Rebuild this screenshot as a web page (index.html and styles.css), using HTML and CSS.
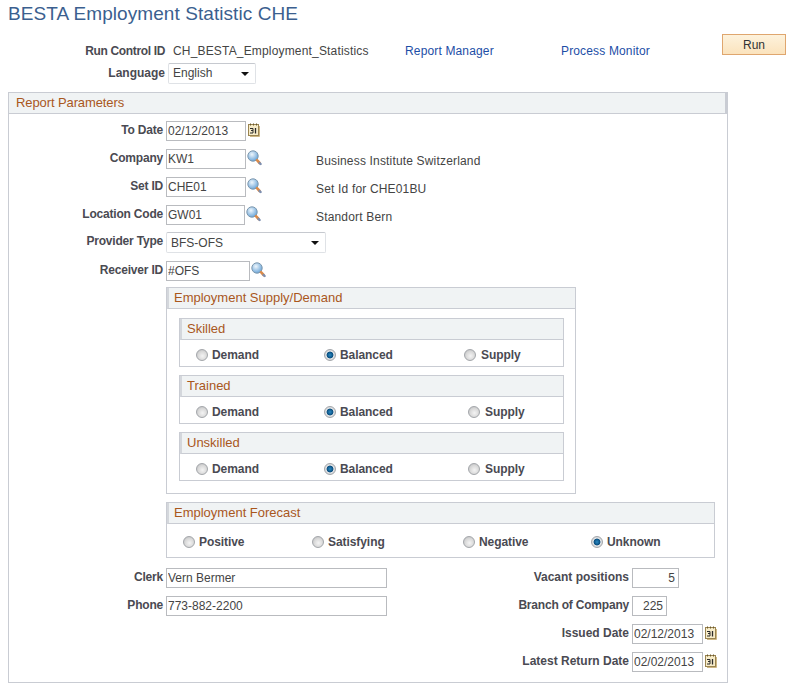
FILE: index.html
```html
<!DOCTYPE html>
<html lang="en">
<head>
<meta charset="utf-8">
<title>BESTA Employment Statistic CHE</title>
<link rel="stylesheet" href="styles.css">
</head>
<body>
<svg class="defs" width="0" height="0" aria-hidden="true">
  <defs>
    <radialGradient id="lens" cx="40%" cy="35%" r="70%"><stop offset="0" stop-color="#eef6fc"/><stop offset="1" stop-color="#62a0d6"/></radialGradient>
    <symbol id="lookup" viewBox="0 0 15 16">
      <circle cx="6" cy="6" r="5.2" fill="url(#lens)" stroke="#7d98ae" stroke-width="1"/>
      <path d="M10 10.2l2.6 2.8" stroke="#d98a4a" stroke-width="2.6" stroke-linecap="round"/>
      <path d="M12.6 13l1 1" stroke="#7d8fb0" stroke-width="2.4" stroke-linecap="round"/>
    </symbol>
    <symbol id="cal" viewBox="0 0 12 14">
      <rect x="0.5" y="1.5" width="10" height="11" fill="#f7ecc9" stroke="#9a8450"/>
      <path d="M11.5 3v10.5H2" fill="none" stroke="#cdb684"/>
      <path d="M2.5 0.5v2M5.5 0.5v2M8.5 0.5v2" stroke="#6b5a2c"/>
      <path d="M2 5.5h3v4.5H2M3 7.5h2" fill="none" stroke="#2b2b2b"/>
      <path d="M7.5 5v5.5" stroke="#2b2b2b" stroke-width="1.3"/>
    </symbol>
  </defs>
</svg>

<h1 class="title">BESTA Employment Statistic CHE</h1>

<div class="top-row">
  <span class="lbl lbl-top lbl-tight">Run Control ID</span>
  <span class="run-id">CH_BESTA_Employment_Statistics</span>
  <a class="link link-rm" href="#">Report Manager</a>
  <a class="link link-pm" href="#">Process Monitor</a>
  <button class="run-btn" type="button">Run</button>
</div>
<div class="lang-row">
  <span class="lbl lbl-top">Language</span>
  <span class="sel sel-lang"><select><option>English</option></select></span>
</div>

<section class="box box-main">
  <h2 class="hdr">Report Parameters</h2>

  <div class="row row-date">
    <label class="lbl lbl-f">To Date</label>
    <input class="inp w-80" value="02/12/2013">
    <svg class="ic-cal"><use href="#cal"/></svg>
  </div>
  <div class="row row-lookup">
    <label class="lbl lbl-f">Company</label>
    <input class="inp w-80" value="KW1">
    <svg class="ic-look"><use href="#lookup"/></svg>
    <span class="desc">Business Institute Switzerland</span>
  </div>
  <div class="row row-lookup">
    <label class="lbl lbl-f">Set ID</label>
    <input class="inp w-80" value="CHE01">
    <svg class="ic-look"><use href="#lookup"/></svg>
    <span class="desc">Set Id for CHE01BU</span>
  </div>
  <div class="row row-lookup">
    <label class="lbl lbl-f">Location Code</label>
    <input class="inp w-79" value="GW01">
    <svg class="ic-look"><use href="#lookup"/></svg>
    <span class="desc desc-loc">Standort Bern</span>
  </div>
  <div class="row row-select">
    <label class="lbl lbl-f lbl-sel">Provider Type</label>
    <span class="sel sel-prov"><select><option>BFS-OFS</option></select></span>
  </div>
  <div class="row row-lookup row-recv">
    <label class="lbl lbl-f">Receiver ID</label>
    <input class="inp w-84" value="#OFS">
    <svg class="ic-look"><use href="#lookup"/></svg>
  </div>

  <section class="box box-sd">
    <h3 class="hdr">Employment Supply/Demand</h3>
    <section class="box box-sub">
      <h4 class="hdr hdr-sub">Skilled</h4>
      <div class="radios radios-a">
        <label class="radio"><input type="radio" name="sk">Demand</label>
        <label class="radio"><input type="radio" name="sk" checked>Balanced</label>
        <label class="radio radio-s"><input type="radio" name="sk">Supply</label>
      </div>
    </section>
    <section class="box box-sub">
      <h4 class="hdr hdr-sub">Trained</h4>
      <div class="radios radios-b">
        <label class="radio"><input type="radio" name="tr">Demand</label>
        <label class="radio"><input type="radio" name="tr" checked>Balanced</label>
        <label class="radio radio-s"><input type="radio" name="tr">Supply</label>
      </div>
    </section>
    <section class="box box-sub">
      <h4 class="hdr hdr-sub">Unskilled</h4>
      <div class="radios radios-b">
        <label class="radio"><input type="radio" name="un">Demand</label>
        <label class="radio"><input type="radio" name="un" checked>Balanced</label>
        <label class="radio radio-s"><input type="radio" name="un">Supply</label>
      </div>
    </section>
  </section>

  <section class="box box-fc">
    <h3 class="hdr">Employment Forecast</h3>
    <div class="radios radios-f">
      <label class="radio"><input type="radio" name="fc">Positive</label>
      <label class="radio"><input type="radio" name="fc">Satisfying</label>
      <label class="radio"><input type="radio" name="fc">Negative</label>
      <label class="radio"><input type="radio" name="fc" checked>Unknown</label>
    </div>
  </section>

  <div class="lower">
    <div class="lower-left">
      <div class="row">
        <label class="lbl lbl-f">Clerk</label>
        <input class="inp w-221" value="Vern Bermer">
      </div>
      <div class="row">
        <label class="lbl lbl-f">Phone</label>
        <input class="inp w-221" value="773-882-2200">
      </div>
    </div>
    <div class="lower-right">
      <div class="row">
        <label class="lbl lbl-r">Vacant positions</label>
        <input class="inp num w-47" value="5">
      </div>
      <div class="row">
        <label class="lbl lbl-r lbl-narrow">Branch of Company</label>
        <input class="inp num w-35" value="225">
      </div>
      <div class="row">
        <label class="lbl lbl-r">Issued Date</label>
        <input class="inp w-71" value="02/12/2013">
        <svg class="ic-cal"><use href="#cal"/></svg>
      </div>
      <div class="row">
        <label class="lbl lbl-r">Latest Return Date</label>
        <input class="inp w-71" value="02/02/2013">
        <svg class="ic-cal"><use href="#cal"/></svg>
      </div>
    </div>
  </div>
</section>
</body>
</html>
```

FILE: styles.css
```css
* { box-sizing: border-box; }
html, body { margin: 0; padding: 0; background: #fff; }
body {
  width: 792px;
  height: 691px;
  overflow: hidden;
  font-family: "Liberation Sans", Arial, sans-serif;
  font-size: 12px;
  color: #444;
}
.defs { position: absolute; }

.title {
  margin: 0;
  padding: 2px 0 0 8px;
  height: 34px;
  font-size: 19px;
  line-height: 23px;
  letter-spacing: 0.07px;
  font-weight: 400;
  color: #3b5f8f;
}

.lbl { font-weight: 700; color: #4a4a52; white-space: nowrap; text-align: right; }
.lbl-top { width: 165px; flex: none; }
.lbl-tight { letter-spacing: -0.35px; }
.lbl-narrow { letter-spacing: -0.2px; }
.lbl-f { width: 154px; margin-right: 1px; flex: none; padding-top: 1px; letter-spacing: -0.2px; }
.lbl-sel { padding-top: 0; }
.lbl-r { width: 142px; flex: none; margin-right: 1px; padding-top: 1px; }

.top-row {
  display: flex;
  align-items: flex-start;
  height: 28px;
  line-height: 35px;
}
.run-id { margin-left: 8px; width: 232px; flex: none; color: #444; letter-spacing: 0.17px; }
.link { color: #1c4ea6; text-decoration: none; flex: none; letter-spacing: 0.15px; }
.link-rm { width: 156px; }
.link-pm { width: 161px; }
.run-btn {
  width: 64px;
  height: 21px;
  padding: 0;
  flex: none;
  font: 12px "Liberation Sans", Arial, sans-serif;
  color: #333;
  border: 1px solid #dfa66e;
  background: linear-gradient(#fdf2dc, #fbe3bd);
}

.lang-row {
  display: flex;
  align-items: center;
  height: 30px;
  padding-bottom: 8px;
}
.lang-row .sel { margin-left: 3px; }

.sel { position: relative; display: inline-block; flex: none; height: 21px; }
.sel select {
  appearance: none;
  -webkit-appearance: none;
  display: block;
  width: 100%;
  height: 100%;
  padding: 0 0 0 4px;
  font: 12px "Liberation Sans", Arial, sans-serif;
  color: #444;
  background: #fff;
  border: 1px solid #dfe2e6;
  border-top-color: #c6c9cf;
  border-radius: 2px;
}
.sel::after {
  content: "";
  position: absolute;
  right: 7px;
  top: 9px;
  border-left: 4px solid transparent;
  border-right: 4px solid transparent;
  border-top: 4px solid #111;
}
.sel-lang { width: 88px; }
.sel-prov { width: 160px; }

.box { border: 1px solid #c9ccd3; }
.hdr {
  margin: 0;
  height: 21px;
  padding-left: 5px;
  font-size: 13px;
  font-weight: 400;
  line-height: 19px;
  color: #a9571d;
  background: #f0f3f4;
  border-bottom: 1px solid #c9ccd3;
  border-left: 2px solid #d4d7dc;
}

.box-main {
  margin-left: 8px;
  width: 720px;
  height: 591px;
  padding-top: 7px;
}
.box-main > .hdr {
  padding-left: 7px;
  border-left: 0;
  border-right: 2px solid #c9ccd3;
  margin-bottom: 7px;
  margin-top: -7px;
  letter-spacing: -0.1px;
}

.row { display: flex; align-items: flex-start; height: 28px; line-height: 17px; }
.row .sel { margin-left: 2px; margin-top: -1px; }

.inp {
  flex: none;
  height: 20px;
  margin-left: 2px;
  padding: 0 1px;
  font: 12px "Liberation Sans", Arial, sans-serif;
  color: #444;
  background: #fff;
  border: 1px solid #b9bbbf;
  border-radius: 0;
}
.num { text-align: right; padding-right: 3px; }
.w-80 { width: 80px; }
.w-79 { width: 79px; }
.w-84 { width: 84px; }
.w-221 { width: 221px; }
.w-47 { width: 47px; }
.w-35 { width: 35px; }
.w-71 { width: 71px; }

.ic-cal { width: 12px; height: 14px; margin-left: 2px; margin-top: 2px; flex: none; }
.ic-look { width: 15px; height: 16px; margin-left: 1px; margin-top: 1px; flex: none; }
.desc { margin-left: 54px; margin-top: 4px; flex: none; color: #444; letter-spacing: 0.17px; }
.desc-loc { margin-left: 55px; }

.box-sd {
  margin-left: 157px;
  margin-top: -2px;
  width: 410px;
  height: 207px;
  padding: 0 11px 0 12px;
}
.box-sd > .hdr { margin: 0 -11px 9px -12px; }
.box-sub { height: 49px; margin-bottom: 8px; }

.radios { display: grid; align-items: center; height: 29px; padding-top: 1px; }
.box-sub .radios { padding-left: 16px; }
.radios-a { grid-template-columns: 128px 140px 1fr; }
.radios-b { grid-template-columns: 128px 144px 1fr; }
.radios-f { grid-template-columns: 129px 151px 128px 1fr; padding-left: 16px; height: 34px; }

.radio {
  display: flex;
  align-items: center;
  font-weight: 700;
  color: #4a4a52;
  white-space: nowrap;
  letter-spacing: -0.07px;
}
.radio input {
  appearance: none;
  -webkit-appearance: none;
  width: 12px;
  height: 12px;
  margin: 0 4px 0 0;
  flex: none;
  border-radius: 50%;
  border: 1px solid #a3a6aa;
  background: radial-gradient(circle at 55% 60%, #f4f4f4 0, #d8d8d8 55%, #b4b6b8 100%);
}
.radio-s input { margin-right: 5px; }
.radio input:checked {
  background: radial-gradient(circle at 50% 50%, #2a8ac4 0, #0a4f80 3px, #e2e4e6 3.8px, #bfc2c5 100%);
}

.box-fc {
  margin-left: 157px;
  margin-top: 8px;
  width: 549px;
  height: 56px;
}

.lower { display: flex; margin-top: 10px; }
.lower-left { width: 478px; flex: none; }
.lower-right { flex: none; width: 220px; }
```
